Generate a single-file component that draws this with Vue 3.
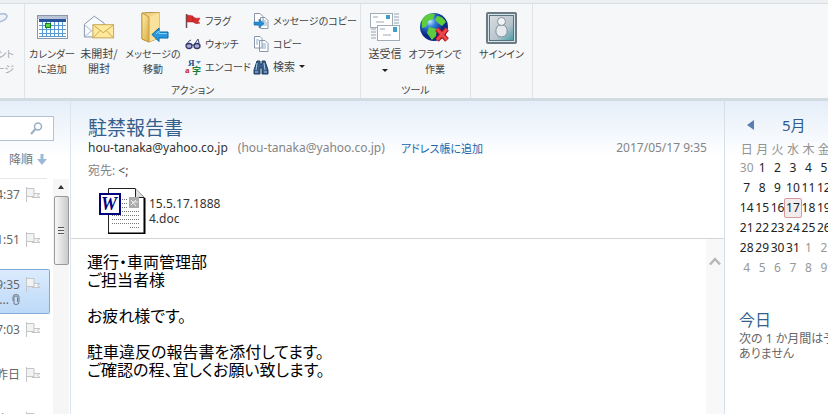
<template>
  <div class="window">
    <!-- Ribbon -->
    <header class="ribbon">
      <div class="group clipped">
        <button class="big" type="button">
          <svg class="icon" viewBox="0 0 32 32">
            <path d="M6 22 Q4 8 14 3 Q24 0 25 4 Q25 8 17 10" fill="#edf2fa" stroke="#a9bcd8" stroke-width="1.5" />
          </svg>
          <span>イベント<br />メッセージ</span>
        </button>
      </div>

      <div class="group actions">
        <div class="tools">
          <button class="big calendar-btn" type="button">
            <svg class="icon" viewBox="0 0 32 32">
              <rect x="1.5" y="3.5" width="30" height="23" fill="#fff" stroke="#8b97a8" />
              <rect x="2" y="4" width="29" height="3" fill="#b9c5d4" />
              <rect x="3" y="7" width="27" height="3" fill="#28559c" />
              <path d="M3 13.5H30M3 17.5H30M3 21.5H30M3 24.5H30M6.5 10V25M10.5 10V25M14.5 10V25M18.5 10V25M22.5 10V25M26.5 10V25" stroke="#5799d0" fill="none" />
              <rect x="9.5" y="11.5" width="5" height="4" fill="#53d83d" stroke="#187c22" />
            </svg>
            <span>カレンダー<br />に追加</span>
          </button>
          <button class="big kanji unread-btn" type="button">
            <svg class="icon" viewBox="0 0 34 32">
              <path d="M1.5 25.5V12L12 3.5L22.5 11V25.5Z" fill="#f7fbff" stroke="#8290a5" />
              <path d="M2 13L9 19L2 25M9 19L22 12" fill="none" stroke="#a4b5ca" />
              <rect x="10.5" y="12.5" width="22" height="14" fill="#ffe99c" stroke="#c8a250" />
              <path d="M11 13L21.5 21L32 13M11 26L18 19M32 26L25 19" fill="none" stroke="#c8a250" />
            </svg>
            <span>未開封/<br />開封</span>
          </button>
          <button class="big move-btn" type="button">
            <svg class="icon" viewBox="0 0 32 32">
              <defs>
                <linearGradient id="folder" x2="1" y2="1">
                  <stop offset="0" stop-color="#fff0a8" />
                  <stop offset="1" stop-color="#d9a83e" />
                </linearGradient>
              </defs>
              <path d="M5 1L22 0V26L12 30L5 27Z" fill="#f3d283" stroke="#b08c48" />
              <path d="M12 5L22 1V26L12 30Z" fill="#fbe29a" />
              <path d="M5 1L12 5V30L5 27Z" fill="url(#folder)" stroke="#c39a45" />
              <path d="M15 22.5L22 16V20H31V26H22V29.5Z" fill="#2998df" stroke="#0968a9" />
              <path d="M19 22L22 19V21.5H30" fill="none" stroke="#83d3fa" />
            </svg>
            <span>メッセージの<br />移動</span>
          </button>

          <div class="small-list first">
            <button class="small" type="button">
              <svg class="mini" viewBox="0 0 16 16">
                <path d="M1.5 1V15" stroke="#704e50" stroke-width="1.5" />
                <path d="M2 2L8 3V9L2 9ZM8 4Q11 6 15 5L13 9L15 10Q10 12 7 8Z" fill="#dc2d2d" stroke="#a82325" stroke-width=".5" />
              </svg>
              フラグ
            </button>
            <button class="small" type="button">
              <svg class="mini" viewBox="0 0 16 16">
                <path d="M1 9L4 5L6 4M9 9L13 3L14 7M6 9L10 9" fill="none" stroke="#444b78" />
                <ellipse cx="4" cy="10" rx="3" ry="2.5" fill="#ababd7" stroke="#303667" stroke-width="1.3" />
                <ellipse cx="12" cy="10" rx="3" ry="2.5" fill="#ababd7" stroke="#303667" stroke-width="1.3" />
              </svg>
              ウォッチ
            </button>
            <button class="small" type="button">
              <svg class="mini" viewBox="0 0 16 16">
                <text x="3" y="7" class="glyph blue">Я</text>
                <text x="0" y="14" class="glyph red">a</text>
                <text x="7" y="15" class="glyph green">字</text>
                <path d="M11 2H16L13.5 5Z" fill="#568bc4" />
              </svg>
              エンコード
            </button>
          </div>
          <div class="small-list">
            <button class="small" type="button">
              <svg class="mini" viewBox="0 0 16 16">
                <path d="M1.5 .5H7L10 3.5V12H1.5ZM7.5 4.5H12L15 7.5V15.5H7.5Z" fill="#fff" stroke="#8997ad" />
                <path d="M10 8H13M10 10H14M10 12H14" stroke="#86acd0" />
                <path d="M1 9H6V6L11 10.5L6 15V12H1Z" fill="#238fd5" stroke="#1267a5" stroke-width=".5" />
              </svg>
              メッセージのコピー
            </button>
            <button class="small" type="button">
              <svg class="mini" viewBox="0 0 16 16">
                <path d="M1.5 .5H7L9 2.5V12H1.5ZM6.5 4.5H12L15 7.5V15.5H6.5Z" fill="#fff" stroke="#8997ad" />
                <path d="M3 4H6M3 6H5M3 8H5M9 8H13M9 10H13M9 12H13" stroke="#86acd0" />
              </svg>
              コピー
            </button>
            <button class="small kanji" type="button">
              <svg class="mini" viewBox="0 0 16 16">
                <path d="M4 2H7V5H9V2H12L15 11V15H9V9H7V15H1V11Z" fill="#385d87" stroke="#1e3e65" />
                <path d="M4 4L3 11M11 4L12 11M2 13H5M11 13H14" stroke="#a7c9e7" />
              </svg>
              検索 <i class="caret"></i>
            </button>
          </div>
        </div>
        <div class="caption">アクション</div>
      </div>

      <div class="group utility">
        <div class="tools">
          <button class="big kanji send-btn" type="button">
            <svg class="icon" viewBox="0 0 32 32">
              <path d="M2 17H7M2 20H7M2 23H7M2 26H7M25 2H30M25 5H30M25 8H30M25 11H30" stroke="#9ba4b1" />
              <rect x="1.5" y="1.5" width="22" height="14" fill="#fff" stroke="#a0acb8" />
              <path d="M4 5H9M7 10H15" stroke="#9aa6b5" />
              <rect x="17" y="3" width="4" height="4" fill="#3f9fc4" />
              <rect x="8.5" y="13.5" width="22" height="15" fill="#fff" stroke="#a0acb8" />
              <path d="M11 17H16M14 23H22" stroke="#9aa6b5" />
              <rect x="24" y="15" width="4" height="5" fill="#3f9fc4" />
            </svg>
            <span>送受信<br /><i class="caret"></i></span>
          </button>
          <button class="big offline-btn" type="button">
            <svg class="icon" viewBox="0 0 32 32">
              <defs>
                <radialGradient id="globe" cx=".35" cy=".3">
                  <stop offset="0" stop-color="#c0ecff" />
                  <stop offset=".4" stop-color="#3581de" />
                  <stop offset="1" stop-color="#092b87" />
                </radialGradient>
              </defs>
              <circle cx="15" cy="15" r="14" fill="url(#globe)" />
              <path d="M3 8Q8 0 16 2L14 7L9 9L7 15L3 16ZM18 4Q24 4 27 10L23 14L19 11L16 8ZM10 15L18 17L17 24L13 28L8 21Z" fill="#5ecc3b" />
              <path d="M18 17L28 28M28 17L18 28" stroke="#9e171f" stroke-width="5" />
              <path d="M18 17L28 28M28 17L18 28" stroke="#ee454b" stroke-width="3" />
            </svg>
            <span>オフラインで<br />作業</span>
          </button>
        </div>
        <div class="caption">ツール</div>
      </div>

      <div class="group account">
        <button class="big" type="button">
          <svg class="icon" viewBox="0 0 32 32">
            <defs>
              <linearGradient id="person" x2="1" y2="1">
                <stop offset="0" stop-color="#d9dee3" />
                <stop offset=".6" stop-color="#b8c4cd" />
                <stop offset="1" stop-color="#439ca4" />
              </linearGradient>
            </defs>
            <rect x="0" y="0" width="31" height="32" rx="2" fill="#6c7a84" />
            <rect x="2" y="2" width="27" height="28" fill="#d7e2e6" />
            <rect x="3.5" y="3.5" width="24" height="25" fill="url(#person)" stroke="#57737f" />
            <path d="M10 21Q9 13 15.5 13Q22 13 21 21Q20 25 15.5 25T10 21Z" fill="#e6eaee" stroke="#84909c" />
            <circle cx="15.5" cy="9.5" r="4" fill="#f2f4f6" stroke="#84909c" />
          </svg>
          <span>サインイン</span>
        </button>
      </div>
    </header>

    <div class="workspace">
      <!-- Message list -->
      <aside class="list-pane">
        <div class="search">
          <input type="text" aria-label="メッセージの検索" />
          <svg class="lens" viewBox="0 0 13 13">
            <circle cx="8" cy="4.5" r="3.5" fill="none" stroke="#9baec4" stroke-width="1.5" />
            <path d="M5.5 7L1 12" stroke="#9baec4" stroke-width="2" />
          </svg>
        </div>
        <button class="sort" type="button">
          降順
          <svg class="down" viewBox="0 0 10 11">
            <path d="M3.5 0H6.5V5H10L5 11L0 5H3.5Z" fill="#9db9d5" />
          </svg>
        </button>
        <div class="list-body">
          <ul class="messages">
            <li v-for="item in messages" :key="item.time" :class="{ selected: item.selected }">
              <div class="when">
                <span>{{ item.time }}</span>
                <span v-if="item.selected" class="attached">
                  ...
                  <svg class="clip" viewBox="0 0 8 11">
                    <path d="M1 7V3Q1 .5 4 .5T7 3V8Q7 10.5 4 10.5T2 8V3.5Q2.5 2 4 2T5.5 3.5V8" fill="none" stroke="#707780" />
                  </svg>
                </span>
              </div>
              <svg class="flag" viewBox="0 0 16 15">
                <path d="M1.5 0V15M2 1.5H9V9.5H2M9 6.5H15L12.5 8.5L15 10.5H7V9.5" fill="#f3f3f3" stroke="#c3c5c8" />
              </svg>
            </li>
          </ul>
          <div class="scrollbar">
            <i class="scroll-up"></i>
            <div class="thumb"><i class="grip"></i></div>
          </div>
        </div>
      </aside>

      <!-- Reading pane -->
      <main class="reader">
        <div class="mail-head">
          <h1>駐禁報告書</h1>
          <div class="sender">
            <span>hou-tanaka@yahoo.co.jp</span>
            <span class="muted">(hou-tanaka@yahoo.co.jp)</span>
            <a href="#" @click.prevent>アドレス帳に追加</a>
            <time>2017/05/17 9:35</time>
          </div>
          <div class="to"><span class="muted">宛先:</span> &lt;;</div>
          <div class="attachment">
            <svg class="doc" viewBox="0 0 48 46">
              <path d="M10.5 .5H37L46.5 10V45.5H10.5Z" fill="#fff" stroke="#222" />
              <path d="M37.5 .5V9.5H46" fill="#ddd" stroke="#222" />
              <path d="M46.5 10V45.5H10" fill="none" stroke="#000" stroke-width="2" />
              <path d="M22 11.5H29M22 15.5H29M22 19.5H29M14 27.5H42M14 31.5H42M14 35.5H42M32 39.5H42M22 23.5H42" stroke="#777" stroke-dasharray="1 1" />
              <rect x="31" y="9" width="10" height="11" fill="#aaa" />
              <path d="M33 12L38 18M38 12L33 17M34 14H40" stroke="#eee" />
              <rect x="2" y="6" width="20" height="20" fill="#fff" stroke="#000080" stroke-width="2" />
              <text x="3" y="22" class="word">W</text>
            </svg>
            <span>15.5.17.1888<br />4.doc</span>
          </div>
        </div>
        <div class="mail-body">
          <div class="content">
            <p v-for="(line, i) in lines" :key="i">{{ line }}</p>
          </div>
          <div class="body-scroll">
            <svg viewBox="0 0 12 9">
              <path d="M1 7.5L6 2L11 7.5" fill="none" stroke="#b7b7b7" stroke-width="2.5" />
            </svg>
          </div>
        </div>
      </main>

      <!-- Calendar -->
      <aside class="calendar-pane">
        <div class="month">
          <button type="button" aria-label="前の月"><i></i></button>
          <span>5月</span>
        </div>
        <table>
          <thead>
            <tr>
              <th v-for="d in weekdays" :key="d">{{ d }}</th>
            </tr>
          </thead>
          <tbody>
            <tr v-for="(week, w) in weeks" :key="w">
              <td v-for="(day, d) in week" :key="d" :class="{ other: isOther(w, day), today: w === 2 && day === 17 }">
                <span>{{ day }}</span>
              </td>
            </tr>
          </tbody>
        </table>
        <h2>今日</h2>
        <p class="agenda">次の 1 か月間は予定は<br />ありません</p>
      </aside>
    </div>
  </div>
</template>

<script setup>
const messages = [
  { time: "14:37" },
  { time: "11:51" },
  { time: "19:35", selected: true },
  { time: "17:03" },
  { time: "昨日" },
  { time: "一昨日" },
];

const lines = [
  "運行・車両管理部",
  "ご担当者様",
  "",
  "お疲れ様です。",
  "",
  "駐車違反の報告書を添付してます。",
  "ご確認の程、宜しくお願い致します。",
];

const weekdays = ["日", "月", "火", "水", "木", "金", "土"];

// six weeks, starting on Sunday 30 April
const weeks = Array.from({ length: 6 }, (_, w) =>
  Array.from({ length: 7 }, (_, d) => new Date(2017, 3, 30 + w * 7 + d).getDate())
);

// days of the previous and next month are greyed out
function isOther(w, day) {
  return (w === 0 && day > 7) || (w > 3 && day < 20);
}
</script>

<style>
body {
  overflow: hidden;
}
</style>

<style scoped>
.window {
  height: 100vh;
  display: flex;
  flex-direction: column;
  overflow: hidden;
  background: #fff;
  color: #444;
  font-family: "Noto Sans", "Noto Sans CJK JP", sans-serif;
  font-size: 12px;
  line-height: 15px;
}

button {
  padding: 0;
  border: 0;
  background: none;
  color: inherit;
  font: inherit;
  white-space: nowrap;
}

h1,
h2,
p,
ul {
  margin: 0;
  padding: 0;
  font-weight: 400;
}

/* ribbon */
.ribbon {
  flex: none;
  display: flex;
  height: 94px;
  margin-top: 3px;
  border-top: 1px solid #d9dde2;
  border-bottom: 3px solid #d3dbe2;
  background: #f5f7f9;
  box-shadow: 0 -3px #edf0f3;
  font-family: "Noto Sans CJK JP", sans-serif;
  font-feature-settings: "palt";
  font-size: 10px;
}

.group {
  box-sizing: border-box;
  flex: none;
  display: flex;
  flex-direction: column;
  padding: 8px 2px 0;
  border-right: 1px solid #dfe4e9;
}

.clipped {
  width: 25px;
  padding-right: 10px;
  align-items: flex-end;
  overflow: hidden;
  color: #a4a8ad;
}

.clipped .big {
  align-items: flex-end;
  text-align: right;
}

.actions {
  width: 336px;
}

.utility {
  width: 110px;
}

.account {
  width: 62px;
}

.tools {
  display: flex;
  height: 66px;
}

.big {
  flex: none;
  display: flex;
  flex-direction: column;
  align-items: center;
  gap: 2px;
  height: 66px;
}

.kanji {
  font-size: 11px;
}

.calendar-btn {
  width: 50px;
}

.unread-btn,
.send-btn {
  width: 44px;
}

.move-btn {
  width: 64px;
}

.offline-btn {
  width: 56px;
}

.icon {
  width: 32px;
  height: 32px;
}

.small-list {
  flex: none;
  display: flex;
  flex-direction: column;
}

.first {
  width: 68px;
}

.small {
  flex: none;
  display: flex;
  align-items: center;
  gap: 4px;
  height: 23px;
  padding-bottom: 6px;
}

.mini {
  flex: none;
  width: 16px;
  height: 16px;
}

.glyph {
  font: bold 9px "Liberation Serif", "Noto Sans CJK JP", serif;
}

.blue {
  fill: #254c8e;
}

.red {
  fill: #c22;
}

.green {
  fill: #187c37;
}

.caret {
  display: inline-block;
  border: 3px solid transparent;
  border-top-color: #222;
  border-bottom: 0;
}

.big .caret {
  vertical-align: middle;
}

.caption {
  margin-top: 4px;
  text-align: center;
}

/* panes */
.workspace {
  flex: 1;
  min-height: 0;
  display: flex;
  background: linear-gradient(#e5eef9, #fff 56px);
}

.list-pane {
  flex: none;
  display: flex;
  flex-direction: column;
  width: 70px;
  overflow: hidden;
  border-right: 1px solid #dce5ee;
}

.search {
  box-sizing: border-box;
  display: flex;
  align-items: center;
  width: 54px;
  height: 25px;
  margin-top: 15px;
  padding-right: 10px;
  border: 1px solid #b4c3d4;
  border-left: 0;
  background: #fff;
}

.search input {
  flex: 1;
  min-width: 0;
  padding: 0;
  border: 0;
  outline: 0;
  background: none;
}

.lens {
  width: 13px;
  height: 13px;
}

.sort {
  display: flex;
  align-items: center;
  justify-content: flex-end;
  gap: 4px;
  width: 47px;
  height: 38px;
  border-bottom: 1px solid #e4e7ea;
  color: #777;
}

.down {
  width: 10px;
  height: 11px;
}

.list-body {
  flex: 1;
  min-height: 0;
  display: flex;
}

.messages {
  width: 53px;
  list-style: none;
}

.messages li {
  box-sizing: border-box;
  display: flex;
  justify-content: flex-end;
  gap: 5px;
  width: 50px;
  height: 45px;
  padding: 7px 8px 0 0;
  border: 1px solid transparent;
  border-left: 0;
  overflow: hidden;
  color: #666;
}

.messages .selected {
  border-color: #82aad6;
  border-radius: 0 2px 2px 0;
  background: linear-gradient(#dbebfd, #bdd9f8);
}

.when {
  display: flex;
  flex-direction: column;
  align-items: flex-end;
  white-space: nowrap;
}

.attached {
  display: flex;
  align-items: center;
  gap: 3px;
}

.clip {
  width: 8px;
  height: 11px;
}

.flag {
  flex: none;
  width: 16px;
  height: 15px;
}

.scrollbar {
  display: flex;
  flex-direction: column;
  align-items: center;
  width: 16px;
  background: #f6f6f6;
}

.scroll-up {
  margin: 6px 0 7px;
  border: 3px solid transparent;
  border-top: 0;
  border-bottom: 4px solid #333;
}

.thumb {
  box-sizing: border-box;
  display: flex;
  justify-content: center;
  align-items: center;
  width: 15px;
  height: 69px;
  border: 1px solid #999;
  border-radius: 2px;
  background: linear-gradient(90deg, #f8f8f8, #c9cacc);
}

.grip {
  width: 6px;
  height: 8px;
  background: repeating-linear-gradient(#555 0 1px, #eee 1px 3px);
}

/* reading pane */
.reader {
  flex: 1;
  min-width: 0;
  display: flex;
  flex-direction: column;
}

.mail-head {
  flex: none;
  padding: 15px 17px 4px;
  border-bottom: 1px solid #d5d5d5;
}

h1 {
  color: #355f8c;
  font-family: "Noto Sans CJK JP", sans-serif;
  font-size: 19px;
  line-height: 22px;
}

.sender {
  display: flex;
  gap: 10px;
  line-height: 20px;
  white-space: nowrap;
  color: #333;
}

.sender .muted,
.to .muted,
.sender time {
  color: #858585;
}

.sender a {
  margin-left: 6px;
  color: #1c66a8;
  text-decoration: none;
  font-family: "Noto Sans CJK JP", sans-serif;
  font-feature-settings: "palt";
  font-size: 11px;
}

.sender time {
  margin-left: auto;
}

.to {
  margin-top: 4px;
  line-height: 18px;
}

.attachment {
  display: flex;
  align-items: center;
  gap: 3px;
  margin: 8px 0 0 10px;
  color: #333;
}

.doc {
  width: 48px;
  height: 46px;
}

.word {
  fill: #000080;
  font: italic bold 18px "Liberation Serif", serif;
}

.mail-body {
  flex: 1;
  min-height: 0;
  display: flex;
}

.content {
  flex: 1;
  padding: 13px 16px;
  color: #000;
  font-family: "Noto Sans CJK JP", sans-serif;
  font-feature-settings: "palt";
  font-size: 16px;
  line-height: 18px;
}

.content p {
  min-height: 18px;
}

.body-scroll {
  width: 18px;
  padding-top: 15px;
  background: #f8f8f8;
  text-align: center;
}

.body-scroll svg {
  width: 12px;
  height: 9px;
}

/* calendar */
.calendar-pane {
  box-sizing: border-box;
  flex: none;
  width: 104px;
  padding: 13px 0 0 14px;
  overflow: hidden;
  border-left: 1px solid #d5dfe9;
}

.month {
  display: flex;
  align-items: center;
  gap: 28px;
  padding-left: 8px;
  color: #2f5a8c;
  font-size: 15px;
  line-height: 22px;
}

.month i {
  display: block;
  border: 5px solid transparent;
  border-left: 0;
  border-right: 7px solid #5480b4;
}

table {
  width: 108px;
  margin-top: 4px;
  border-collapse: collapse;
  table-layout: fixed;
  color: #222;
  text-align: center;
}

th,
td {
  height: 20px;
  padding: 0;
}

th {
  height: 18px;
  color: #929292;
  font-weight: 400;
}

td span {
  display: block;
  line-height: 18px;
  border: 1px solid transparent;
  margin: 0 -1px;
}

.other {
  color: #999;
}

.today span {
  border-color: #d59a9a;
  border-radius: 2px;
  background: #f2ecee;
}

h2 {
  margin-top: 31px;
  color: #355f8c;
  font-size: 16px;
  line-height: 22px;
}

.agenda {
  color: #666;
  font-feature-settings: "palt";
  white-space: nowrap;
}
</style>
